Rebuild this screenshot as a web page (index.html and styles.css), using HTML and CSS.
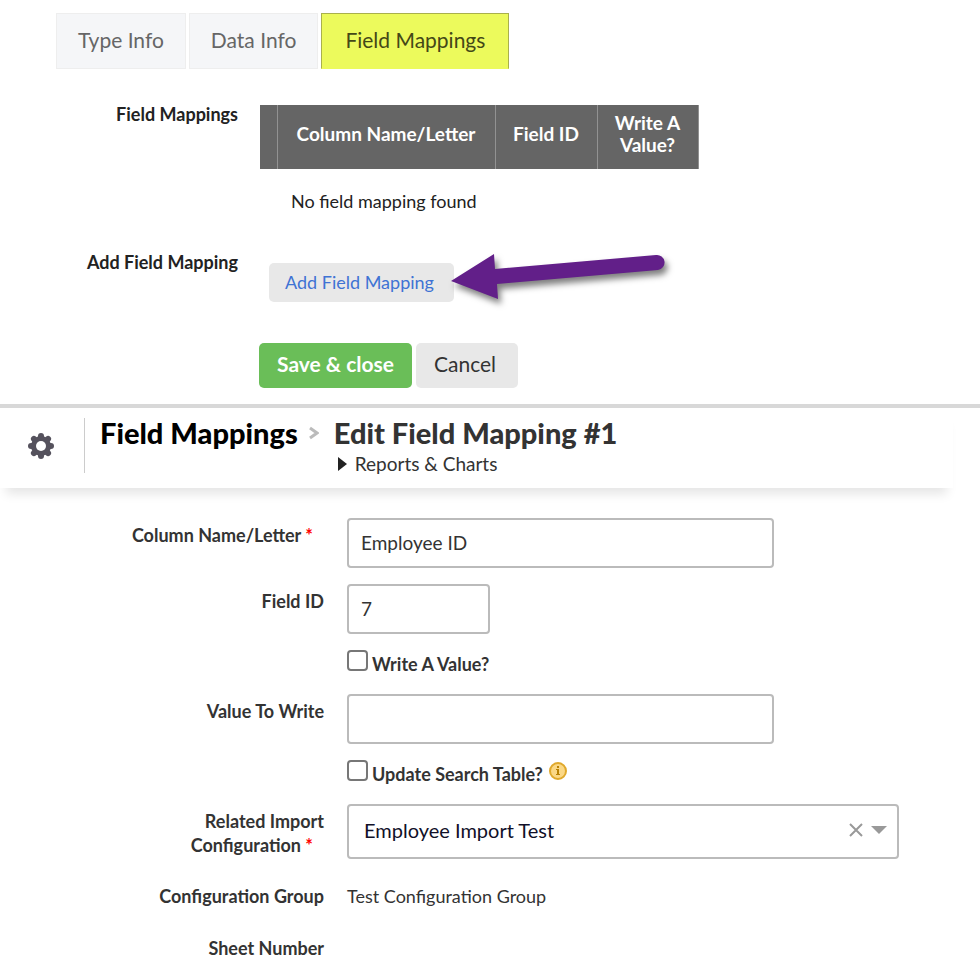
FILE: index.html
```html
<!DOCTYPE html>
<html lang="en">
<head>
  <meta charset="UTF-8">
  <meta name="viewport" content="width=device-width, initial-scale=1">
  <title>Edit Field Mapping</title>
  <link rel="stylesheet" href="styles.css">
</head>
<body>

  <section class="mappings">
    <nav class="tabs">
      <a class="tab" href="#type">Type Info</a>
      <a class="tab" href="#data">Data Info</a>
      <a class="tab active" href="#mappings">Field Mappings</a>
    </nav>

    <div class="mapping-row">
      <div class="mapping-label">Field Mappings</div>
      <div>
        <table class="mapping-table">
          <thead>
            <tr>
              <th class="col-handle"></th>
              <th class="col-name">Column Name/Letter</th>
              <th class="col-id">Field ID</th>
              <th class="col-write">Write A Value?</th>
            </tr>
          </thead>
          <tbody>
            <tr>
              <td colspan="4">No field mapping found</td>
            </tr>
          </tbody>
        </table>
      </div>
    </div>

    <div class="mapping-row">
      <div class="mapping-label">Add Field Mapping</div>
      <div class="add-cell">
        <button class="btn btn-add" type="button">Add Field Mapping</button>
        <svg class="arrow" width="226" height="58" viewBox="0 0 226 58" aria-hidden="true">
          <path d="M1 30 L44 3 L45 18 L206 4 A7 7 0 0 1 208 19 L47 33 L48 48 Z" fill="#621f89"/>
        </svg>
      </div>
    </div>

    <div class="actions">
      <button class="btn btn-save" type="submit">Save &amp; close</button>
      <button class="btn btn-cancel" type="button">Cancel</button>
    </div>
  </section>

  <header class="page-header">
    <button class="gear" type="button" aria-label="Settings">
      <svg width="26" height="26" viewBox="0 0 26 26">
        <g fill="#55525d">
          <rect x="10" y="0" width="6" height="26" rx="3"/>
          <rect x="10" y="0" width="6" height="26" rx="3" transform="rotate(45 13 13)"/>
          <rect x="10" y="0" width="6" height="26" rx="3" transform="rotate(90 13 13)"/>
          <rect x="10" y="0" width="6" height="26" rx="3" transform="rotate(135 13 13)"/>
          <circle cx="13" cy="13" r="10"/>
        </g>
        <circle cx="13" cy="13" r="5" fill="#fff"/>
      </svg>
    </button>
    <div class="crumbs">
      <a class="crumb" href="#mappings">Field Mappings</a>
      <svg class="crumb-arrow" width="10" height="14" viewBox="0 0 10 14" aria-hidden="true">
        <path d="M1 2 L8 7 L1 12" fill="none" stroke="#bbb" stroke-width="3"/>
      </svg>
      <div class="current">
        <h1>Edit Field Mapping #1</h1>
        <a class="reports" href="#reports">
          <svg width="9" height="14" viewBox="0 0 9 14" aria-hidden="true"><path d="M0 0 L9 7 L0 14 Z" fill="#222"/></svg>
          Reports &amp; Charts
        </a>
      </div>
    </div>
  </header>

  <form class="edit-form">
    <div class="row">
      <label class="label label-wide" for="column-name">Column Name/Letter <span class="required">*</span></label>
      <input class="text" id="column-name" type="text" value="Employee ID">
    </div>
    <div class="row">
      <label class="label" for="field-id">Field ID</label>
      <input class="text text-short" id="field-id" type="text" value="7">
    </div>
    <div class="row">
      <div class="check">
        <input id="write-value" type="checkbox">
        <label for="write-value">Write A Value?</label>
      </div>
    </div>
    <div class="row">
      <label class="label" for="value-to-write">Value To Write</label>
      <input class="text" id="value-to-write" type="text">
    </div>
    <div class="row">
      <div class="check">
        <input id="update-search" type="checkbox">
        <label for="update-search">Update Search Table?</label>
        <svg class="info" width="18" height="18" viewBox="0 0 18 18" aria-hidden="true">
          <circle cx="9" cy="9" r="8" fill="#fbd886" stroke="#e0a92c" stroke-width="2"/>
          <path d="M8 4 H10 V6 H8 Z M7 7 H10 V12 H11 V13 H7 V12 H8 V8 H7 Z" fill="#b98204"/>
        </svg>
      </div>
    </div>
    <div class="row">
      <label class="label" for="related"><span>Related Import</span> <span>Configuration</span> <span class="required">*</span></label>
      <div class="select-box">
        <select id="related">
          <option>Employee Import Test</option>
        </select>
        <div class="select-icons">
          <button class="clear" type="button" aria-label="Clear">
            <svg width="14" height="14" viewBox="0 0 14 14"><path d="M1 1 L13 13 M13 1 L1 13" stroke="#999" stroke-width="2"/></svg>
          </button>
          <svg width="16" height="8" viewBox="0 0 16 8" aria-hidden="true"><path d="M0 0 H16 L8 8 Z" fill="#999"/></svg>
        </div>
      </div>
    </div>
    <div class="row row-static">
      <div class="label label-wide">Configuration Group</div>
      <div class="value">Test Configuration Group</div>
    </div>
    <div class="row row-static">
      <div class="label label-wide">Sheet Number</div>
      <div class="value"></div>
    </div>
  </form>

</body>
</html>
```

FILE: styles.css
```css
* {
  box-sizing: border-box;
}

body {
  margin: 0;
  background: #fff;
  color: #333;
  font-family: Lato, "Open Sans", sans-serif;
  font-size: 19px;
  line-height: 24px;
}

a {
  color: inherit;
  text-decoration: none;
}

button,
input,
select {
  font: inherit;
}

/* Mapping list */
.mappings {
  padding: 13px 0 16px;
  border-bottom: 4px solid #d8d8d8;
}

.tabs {
  display: flex;
  gap: 3px;
  margin: 0 0 36px 56px;
}

.tab {
  padding: 14px 21px 16px;
  border: 1px solid #eee;
  background: #f5f6f8;
  color: #666;
  font-size: 21px;
}

.tab.active {
  padding-right: 23px;
  padding-left: 23px;
  border-color: #a9b04c;
  border-bottom-color: #ecfa5c;
  background: #ecfa5c;
  color: #444817;
}

.mapping-row {
  display: grid;
  grid-template-columns: 238px 1fr;
  column-gap: 22px;
}

.mapping-label {
  color: #222;
  font-size: 18px;
  font-weight: bold;
  line-height: 18px;
  text-align: right;
}

.mapping-table {
  border-collapse: collapse;
}

.mapping-table th {
  height: 64px;
  padding: 0 14px 6px;
  border-right: 1px solid #929292;
  background: #656565;
  color: #fff;
  line-height: 22px;
}

.mapping-table .col-handle {
  width: 17px;
  padding: 0;
}

.mapping-table .col-name {
  width: 218px;
}

.mapping-table .col-id {
  width: 102px;
}

.mapping-table .col-write {
  width: 101px;
}

.mapping-table td {
  padding: 20px 31px 40px;
  color: #222;
  font-size: 18px;
}

.add-cell {
  display: flex;
  padding: 10px 0 0 9px;
}

.btn {
  border: 0;
  border-radius: 5px;
  background: #e8e8e8;
  color: #333;
  cursor: pointer;
}

.btn-add {
  padding: 7px 20px 8px 16px;
  color: #3f73d4;
  font-size: 18px;
}

/* callout lying over the end of the button */
.arrow {
  margin: -12px 0 -8px -4px;
  overflow: visible;
  filter: drop-shadow(3px 5px 3px rgba(0, 0, 0, 0.5));
}

.actions {
  display: flex;
  gap: 4px;
  margin: 41px 0 0 259px;
}

.btn-save,
.btn-cancel {
  height: 45px;
  padding: 0 18px 3px;
  font-size: 21px;
}

.btn-cancel {
  padding-right: 22px;
}

.btn-save {
  background: #6abe58;
  color: #fff;
  font-weight: bold;
}

/* Header */
.page-header {
  display: flex;
  margin-right: 27px;
  padding: 10px 0 15px;
  box-shadow: 0 12px 10px -6px rgba(0, 0, 0, 0.1);
}

.gear {
  display: flex;
  align-items: center;
  width: 85px;
  height: 55px;
  padding: 0 0 0 28px;
  border: 0;
  border-right: 1px solid #ccc;
  background: none;
}

.crumbs {
  display: flex;
  height: 55px;
  padding-left: 15px;
}

.crumb,
.current h1 {
  margin: 0;
  color: #000;
  font-size: 29px;
  font-weight: 900;
  line-height: 30px;
}

.current h1 {
  color: #333;
}

.crumb-arrow {
  margin: 8px 15px 0 11px;
}

.reports {
  display: flex;
  align-items: center;
  gap: 8px;
  margin: 4px 0 0 4px;
}

/* Edit form */
.edit-form {
  display: flex;
  flex-direction: column;
  gap: 16px;
  padding: 30px 27px 16px 0;
}

.row {
  display: grid;
  grid-template-columns: 324px 1fr;
  column-gap: 23px;
}

.label {
  padding: 5px 0 0 150px;
  font-size: 18px;
  font-weight: bold;
  text-align: right;
}

.label-wide {
  padding-left: 0;
}

.required {
  margin-right: 11px;
  color: #f00;
}

.text,
.select-box select {
  border: 2px solid #bbb;
  border-radius: 4px;
  background: #fff;
}

.text {
  width: 427px;
  max-width: 100%;
  height: 50px;
  padding: 0 12px 2px;
  color: #333;
}

.text-short {
  width: 143px;
}

.check {
  display: flex;
  grid-column: 2;
  align-items: flex-start;
  gap: 4px;
  height: 28px;
  font-size: 18px;
  font-weight: bold;
}

.check label {
  padding-top: 2px;
}

.check input {
  appearance: none;
  width: 21px;
  height: 21px;
  margin: 0;
  border: 2px solid #777;
  border-radius: 4px;
}

.check input:checked {
  background: #6abe58;
}

.info {
  margin: 2px 0 0 2px;
}

.select-box {
  position: relative;
  width: 552px;
  max-width: 100%;
}

.select-box select {
  appearance: none;
  width: 100%;
  height: 55px;
  padding: 0 60px 4px 15px;
  color: #101028;
  font-size: 20px;
}

.select-icons {
  position: absolute;
  top: 0;
  right: 12px;
  display: flex;
  align-items: center;
  gap: 8px;
  height: 52px;
  pointer-events: none;
}

.clear {
  display: flex;
  padding: 0;
  border: 0;
  background: none;
  pointer-events: auto;
}

.row-static {
  min-height: 36px;
  padding-top: 4px;
}

.value {
  padding-top: 5px;
  font-size: 18px;
}
```
